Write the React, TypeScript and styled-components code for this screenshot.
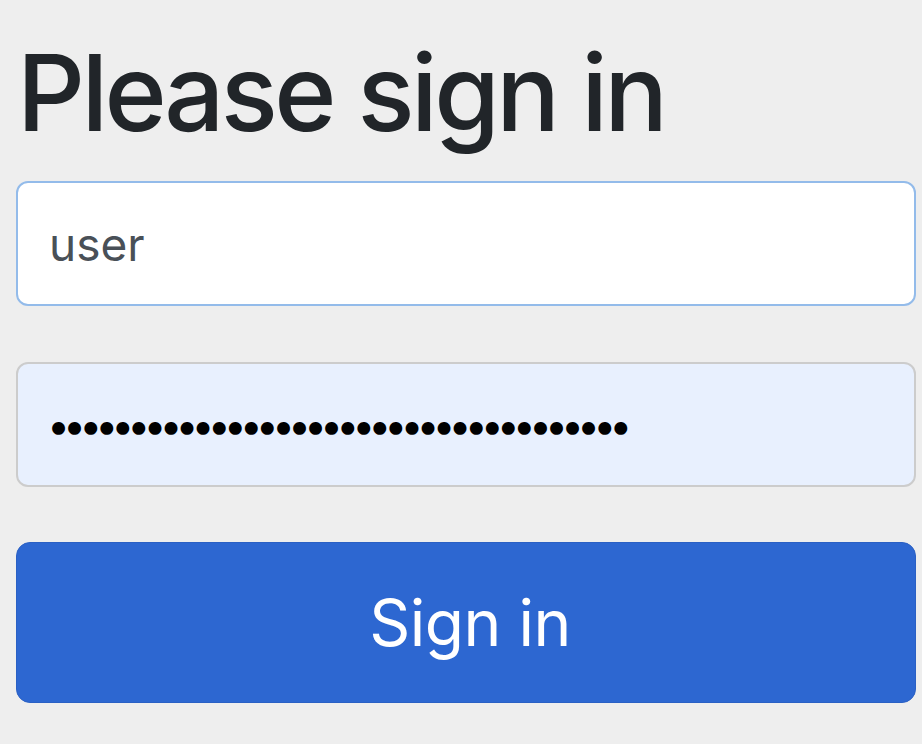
import styled, { createGlobalStyle } from 'styled-components';

const GlobalStyle = createGlobalStyle`
  html, body {
    margin: 0;
    padding: 0;
    background: #eeeeee;
  }
  body {
    font-family: Inter, "Liberation Sans", Arial, sans-serif;
  }
`;

const SignInForm = styled.form`
  display: flex;
  flex-direction: column;
  padding: 30px 6px 0 16px;
`;

const Heading = styled.h1`
  margin: 0 0 25px;
  font-size: 106px;
  line-height: 126px;
  font-weight: 500;
  letter-spacing: -3.6px;
  color: #212529;
  padding-left: 1px;
`;

const Input = styled.input<{ $focused?: boolean; $autofilled?: boolean }>`
  box-sizing: border-box;
  width: 100%;
  height: 125px;
  margin: 0 0 56px;
  padding: 0 31px;
  font-family: inherit;
  font-size: 46px;
  color: #495057;
  background: ${(p) => (p.$autofilled ? '#e8f0fe' : '#ffffff')};
  border: 2px solid ${(p) => (p.$focused ? '#93bbea' : '#cccccc')};
  border-radius: 12px;
  outline: none;

  &[type='password'] {
    color: #000;
    font-size: 41px;
    letter-spacing: -7px;
    padding: 0 29px 0;
  }
`;

const SubmitButton = styled.button`
  box-sizing: border-box;
  width: 100%;
  height: 161px;
  margin-top: -1px;
  padding: 0 0 0 8px;
  font-family: inherit;
  font-size: 64px;
  font-weight: 400;
  letter-spacing: -0.5px;
  color: #ffffff;
  background: #2d67d1;
  border: 1px solid #2a60c4;
  border-radius: 14px;
  cursor: pointer;
`;

function App() {
  return (
    <>
      <GlobalStyle />
      <SignInForm onSubmit={(e) => e.preventDefault()}>
        <Heading>Please sign in</Heading>
        <Input type="text" name="username" defaultValue="user" $focused />
        <Input
          type="password"
          name="password"
          defaultValue="passwordpasswordpasswordpassword1234"
          $autofilled
        />
        <SubmitButton type="submit">Sign in</SubmitButton>
      </SignInForm>
    </>
  );
}

export default App;
